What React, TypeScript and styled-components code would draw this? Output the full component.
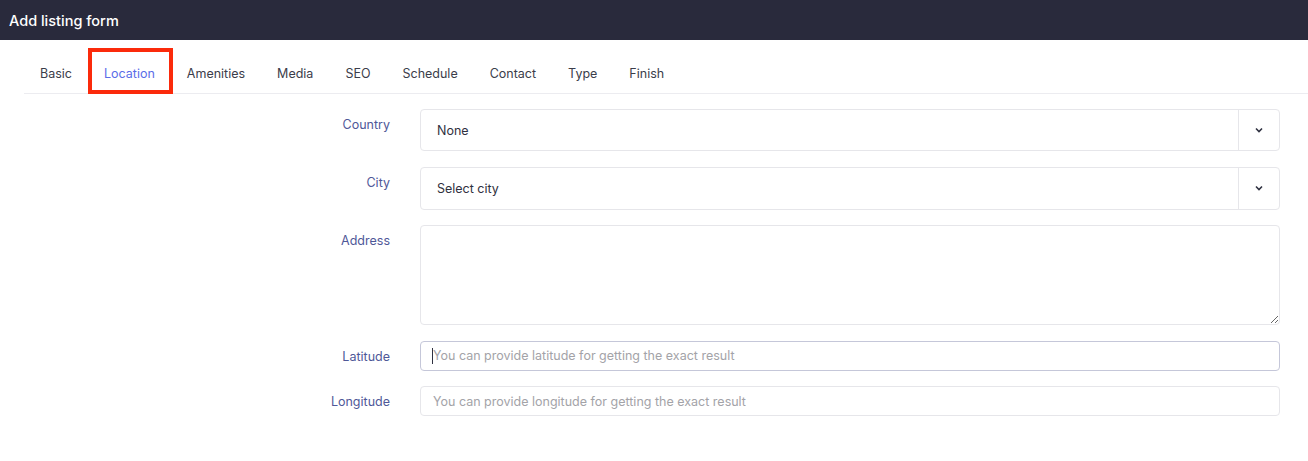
import React from 'react';
import styled, { createGlobalStyle } from 'styled-components';

const colors = {
  header: '#292a3c',
  white: '#ffffff',
  tabText: '#3b3d4a',
  active: '#5a6de8',
  line: '#ececf0',
  label: '#4f5898',
  border: '#e6e6ea',
  focus: '#c5c7d9',
  text: '#2f3140',
  placeholder: '#a3a3a8',
  marker: '#fb2a0b',
};

const GlobalStyle = createGlobalStyle`
  * { box-sizing: border-box; }
  body {
    margin: 0;
    background: ${colors.white};
    font-family: Inter, "Open Sans", sans-serif;
  }
`;

const tabs = ['Basic', 'Location', 'Amenities', 'Media', 'SEO', 'Schedule', 'Contact', 'Type', 'Finish'];

const Header = styled.header`
  height: 40px;
  display: flex;
  align-items: center;
  padding-left: 9px;
  background: ${colors.header};
  color: ${colors.white};
  font-size: 14.5px;
  font-weight: 500;
`;

const TabBar = styled.nav`
  display: flex;
  margin: 12px 0 0 24px;
  border-bottom: 1px solid ${colors.line};
`;

const Tab = styled.div<{ $active?: boolean }>`
  position: relative;
  padding: 13px 16px 10px;
  line-height: 18px;
  font-size: 12.5px;
  color: ${(p) => (p.$active ? colors.active : colors.tabText)};

  ${(p) =>
    p.$active &&
    `
    &::after {
      content: '';
      position: absolute;
      top: -4px;
      left: 0;
      right: -2px;
      bottom: -1px;
      border: 4px solid ${colors.marker};
    }
  `}
`;

const Form = styled.form`
  display: grid;
  grid-template-columns: 366px 1fr;
  column-gap: 30px;
  row-gap: 15.5px;
  margin: 15px 28px 0 24px;
`;

const Label = styled.label`
  text-align: right;
  padding-top: 7px;
  line-height: 18px;
  font-size: 12.5px;
  color: ${colors.label};
`;

const SelectBox = styled.div<{ $height: number }>`
  display: flex;
  height: ${(p) => p.$height}px;
  border: 1px solid ${colors.border};
  border-radius: 4px;
  background: ${colors.white};
`;

const SelectValue = styled.div`
  flex: 1;
  display: flex;
  align-items: center;
  padding-left: 16px;
  font-size: 12.5px;
  color: ${colors.text};
`;

const Arrow = styled.div`
  width: 41px;
  display: flex;
  align-items: center;
  justify-content: center;
  border-left: 1px solid ${colors.border};
  color: ${colors.text};
`;

const TextArea = styled.textarea`
  height: 100px;
  width: 100%;
  border: 1px solid ${colors.border};
  border-radius: 4px;
  resize: vertical;
  display: block;
  font-family: inherit;
  outline: none;
`;

const InputWrap = styled.div`
  position: relative;
`;

const Input = styled.input<{ $focused?: boolean }>`
  display: block;
  width: 100%;
  height: 30px;
  padding: 0 12px;
  border: 1px solid ${(p) => (p.$focused ? colors.focus : colors.border)};
  border-radius: 4px;
  font-family: inherit;
  font-size: 12.5px;
  color: ${colors.text};
  outline: none;

  &::placeholder {
    color: ${colors.placeholder};
  }
`;

const Caret = styled.span`
  position: absolute;
  left: 12px;
  top: 7px;
  width: 1px;
  height: 16px;
  background: ${colors.text};
`;

const Chevron = () => (
  <svg width="8" height="6" viewBox="0 0 8 6">
    <path d="M1 1.5 L4 4.5 L7 1.5" fill="none" stroke="currentColor" strokeWidth="1.6" />
  </svg>
);

export default function App() {
  return (
    <>
      <GlobalStyle />
      <Header>Add listing form</Header>
      <TabBar>
        {tabs.map((t) => (
          <Tab key={t} $active={t === 'Location'}>
            {t}
          </Tab>
        ))}
      </TabBar>
      <Form>
        <Label>Country</Label>
        <SelectBox $height={42}>
          <SelectValue>None</SelectValue>
          <Arrow>
            <Chevron />
          </Arrow>
        </SelectBox>

        <Label>City</Label>
        <SelectBox $height={43}>
          <SelectValue>Select city</SelectValue>
          <Arrow>
            <Chevron />
          </Arrow>
        </SelectBox>

        <Label>Address</Label>
        <TextArea />

        <Label>Latitude</Label>
        <InputWrap>
          <Input $focused placeholder="You can provide latitude for getting the exact result" />
          <Caret />
        </InputWrap>

        <Label>Longitude</Label>
        <Input placeholder="You can provide longitude for getting the exact result" />
      </Form>
    </>
  );
}
